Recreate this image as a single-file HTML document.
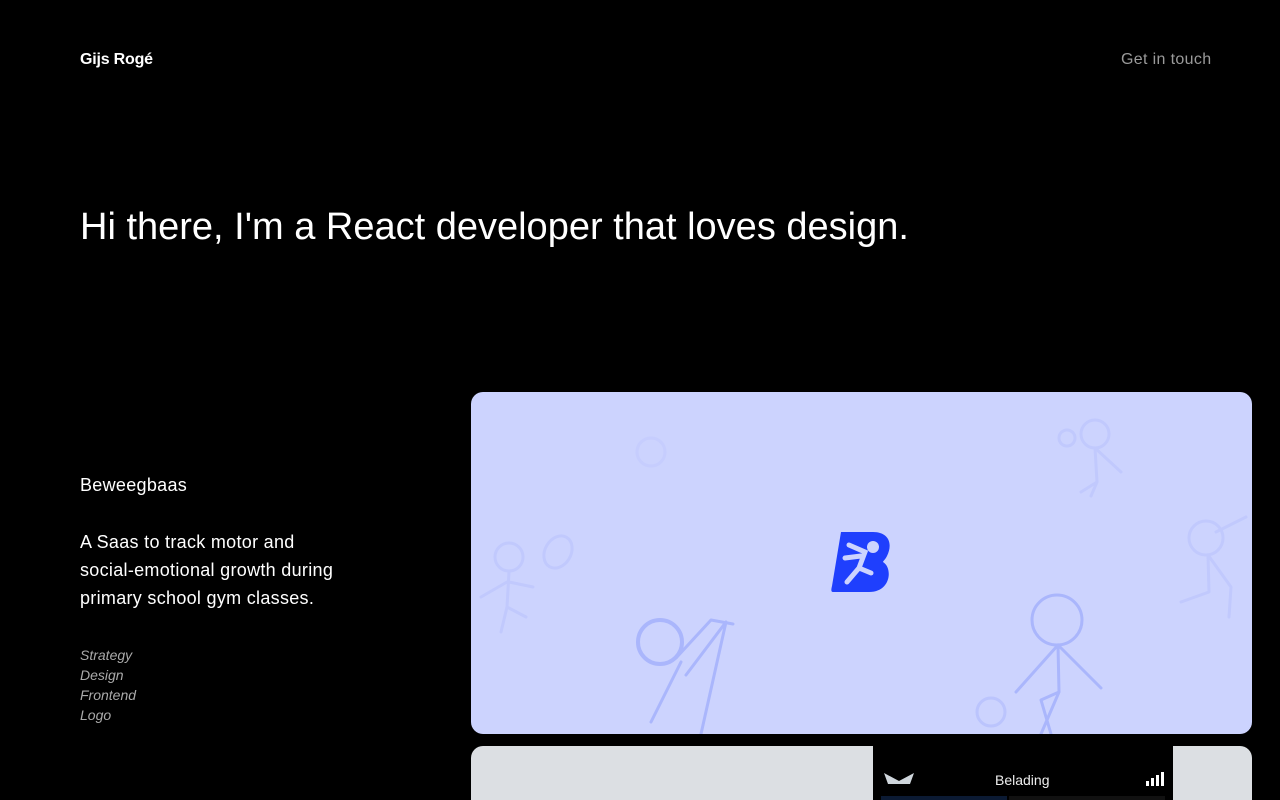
<!DOCTYPE html>
<html><head><meta charset="utf-8"><style>
*{margin:0;padding:0;box-sizing:border-box}
html,body{width:1280px;height:800px;overflow:hidden}
body{background:#000;color:#fff;font-family:"Liberation Sans",sans-serif;position:relative}
.logo{position:absolute;left:80px;top:51px;font-weight:700;font-size:16px;letter-spacing:-0.2px}
.git{position:absolute;left:1121px;top:51px;font-size:16px;color:#9a9a9a;letter-spacing:0.35px}
h1{position:absolute;left:80px;top:206px;font-weight:400;font-size:38px;letter-spacing:0}
.t{position:absolute;left:80px;top:475px;font-size:18px;letter-spacing:0.3px}
.d{position:absolute;left:80px;top:528px;font-size:18px;line-height:28px;width:268px;letter-spacing:0.3px}
.tags{position:absolute;left:80px;top:645px;font-size:14px;line-height:20px;font-style:italic;color:#aaa}
.card{position:absolute;left:471px;top:392px;width:781px;height:342px;border-radius:12px;background:#ccd3fe;overflow:hidden}
.card2{position:absolute;left:471px;top:746px;width:781px;height:54px;border-radius:12px 12px 0 0;background:#dcdfe3;overflow:hidden}
.phone{position:absolute;left:402px;top:0;width:300px;height:80px;background:#000}
</style></head><body>
<div class="logo">Gijs Rogé</div>
<div class="git">Get in touch</div>
<h1>Hi there, I'm a React developer that loves design.</h1>
<div class="t">Beweegbaas</div>
<div class="d">A Saas to track motor and social-emotional growth during primary school gym classes.</div>
<div class="tags">Strategy<br>Design<br>Frontend<br>Logo</div>
<div class="card">
<svg width="781" height="342" fill="none" stroke-linecap="round" stroke-linejoin="round">
<g stroke="#aab6fc" stroke-width="3">
<circle cx="189" cy="250" r="22" stroke-width="4"/>
<path d="M205 266 L240 228 L262 232 M210 270 L180 330 M215 283 L255 230 L230 342"/>
<circle cx="586" cy="228" r="25"/>
<path d="M587 253 L588 300 L570 308 L580 342 M587 253 L545 300 M587 253 L630 296 M588 300 L570 342"/>
<circle cx="520" cy="320" r="14" opacity=".5"/>
</g>
<g stroke="#bcc5fd" stroke-width="3" opacity=".7">
<circle cx="38" cy="165" r="14"/><path d="M38 180 L36 215 L55 225 M36 215 L30 240 M36 190 L10 205 M38 190 L62 195"/>
<ellipse cx="87" cy="160" rx="13" ry="17" transform="rotate(30 87 160)"/>
<circle cx="624" cy="42" r="14"/><circle cx="596" cy="46" r="8"/><path d="M624 56 L626 90 L610 100 M624 56 L650 80 M626 90 L620 104"/>
<circle cx="735" cy="146" r="17"/><path d="M737 163 L738 200 L710 210 M737 163 L760 195 L758 225 M745 140 L775 125"/>
<circle cx="180" cy="60" r="14" opacity=".6"/>
</g>
</svg>
<svg style="position:absolute;left:360px;top:138px" width="62" height="64" viewBox="0 0 62 64">
<path d="M10 2 H42 C58 2 62 14 56 26 C54 30 52 31 52 32 C62 38 60 62 38 62 H2 C0 62 0 60 1 56 Z" fill="#1f3ffd"/>
<circle cx="42" cy="17" r="6" fill="#ccd3fe"/>
<path d="M18 15 L34 22 L28 38 L16 52 M28 38 L40 43 M14 28 L30 26" stroke="#ccd3fe" stroke-width="5" stroke-linecap="round" fill="none"/>
</svg>
</div>
<div class="card2"><div class="phone">
<svg style="position:absolute;left:10px;top:26px" width="32" height="14"><path d="M1 1 L16 9 L31 1 L27 12 H5 Z" fill="#cfd6dc"/></svg>
<div style="position:absolute;left:122px;top:26px;font-size:14px;color:#eee">Belading</div>
<svg style="position:absolute;left:273px;top:26px" width="20" height="14"><rect x="0" y="9" width="3" height="5" fill="#fff"/><rect x="5" y="6" width="3" height="8" fill="#fff"/><rect x="10" y="3" width="3" height="11" fill="#fff"/><rect x="15" y="0" width="3" height="14" fill="#fff"/></svg>
<div style="position:absolute;left:8px;top:50px;width:126px;height:10px;background:#0b1a33"></div>
<div style="position:absolute;left:136px;top:50px;width:156px;height:10px;background:#111"></div>
</div></div>
</body></html>
